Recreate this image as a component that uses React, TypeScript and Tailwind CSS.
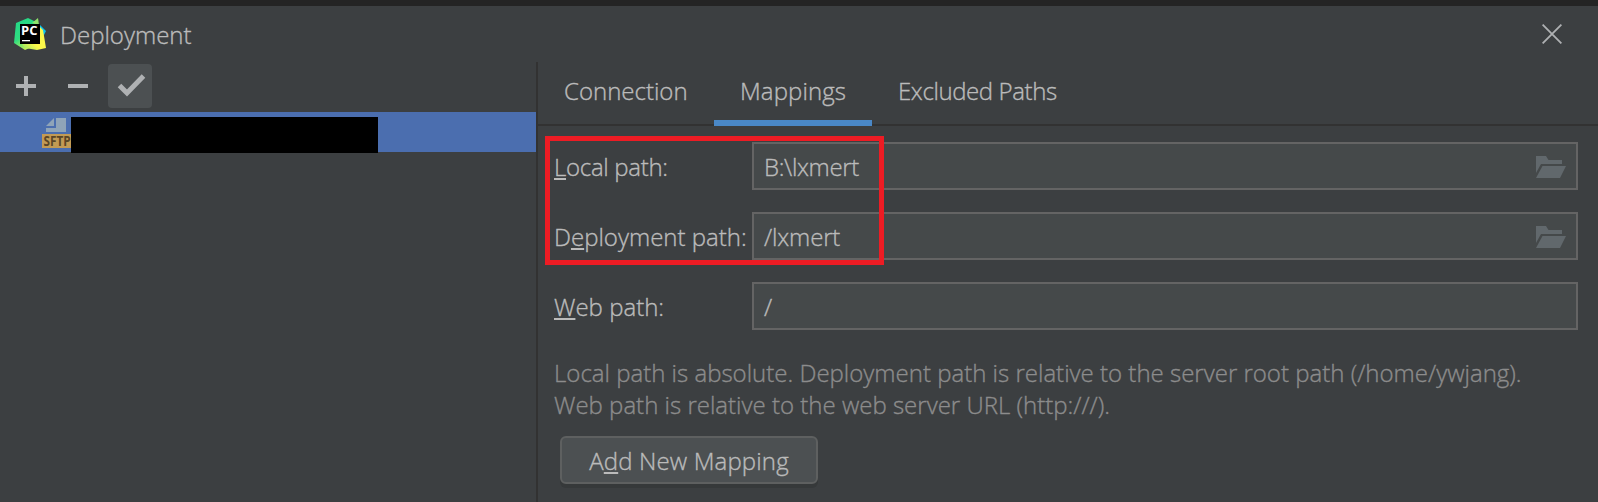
import React from "react";

function Logo() {
  return (
    <svg width="32" height="32" viewBox="0 0 32 32" className="shrink-0">
      <defs>
        <linearGradient id="g1" x1="0" y1="0" x2="0.5" y2="1">
          <stop offset="0" stopColor="#21d789" />
          <stop offset="0.6" stopColor="#2fdc80" />
          <stop offset="1" stopColor="#c8f255" />
        </linearGradient>
        <linearGradient id="g2" x1="0" y1="1" x2="1" y2="0">
          <stop offset="0" stopColor="#8fe86a" />
          <stop offset="0.4" stopColor="#fcf84a" />
          <stop offset="1" stopColor="#fcf84a" />
        </linearGradient>
      </defs>
      <path d="M26 7l6 6-3 6-6-3z" fill="#07c3f2" />
      <path d="M2 5L14 0l8 4-2 24-9 4L0 25z" fill="url(#g1)" />
      <path d="M18 5L24 0l1 7z" fill="#8fe36a" />
      <path d="M26 9l3 3 3 18-9 2-12-2-3-4 18-1z" fill="url(#g2)" />
      <rect x="6" y="6" width="20" height="20" fill="#000" />
      <rect x="8" y="22" width="8" height="1.3" fill="#fff" />
      <text x="7" y="17" fontSize="12.2" fontWeight="700" fill="#fff" fontFamily="Open Sans, sans-serif" textLength="16.4" lengthAdjust="spacingAndGlyphs">PC</text>
    </svg>
  );
}

function FolderIcon() {
  return (
    <svg width="30" height="22" viewBox="0 0 30 22" fill="#61686c" className="mt-px shrink-0">
      <path d="M0 0h10l2.5 4H26v4H5L0 17z" />
      <path d="M6.5 10H30l-6 12H0z" />
    </svg>
  );
}

function Field({ label, children, browse }: { label: React.ReactNode; children: React.ReactNode; browse?: boolean }) {
  return (
    <div className="flex h-12 items-center">
      <div className="w-[198px] shrink-0 pt-[2px] whitespace-nowrap">{label}</div>
      <div className="flex h-12 flex-1 items-center justify-between border-2 border-[#646464] bg-[#45494a] pt-px pr-[10px] pl-[10px]">
        {children}
        {browse && <FolderIcon />}
      </div>
    </div>
  );
}

function Key({ children }: { children: string }) {
  return <span className="underline decoration-2 underline-offset-2 [text-decoration-skip-ink:none]">{children}</span>;
}

export default function App() {
  return (
    <div className="relative flex h-[502px] w-[1598px] flex-col overflow-hidden bg-[#3c3f41] font-['Open_Sans',sans-serif] text-[24px] leading-8 font-light text-[#bbbbbb] [-webkit-text-stroke:0.35px]">
      <div className="h-[6px] shrink-0 bg-[#242424]" />
      <header className="flex h-14 shrink-0 items-center justify-between pr-9 pl-[14px]">
        <div className="flex items-center gap-[14px]">
          <Logo />
          <span className="pt-[2px]">Deployment</span>
        </div>
        <svg width="20" height="20" viewBox="0 0 20 20" stroke="#afb1b3" strokeWidth="1.8">
          <path d="M.6.6l18.8 18.8M19.4.6L.6 19.4" />
        </svg>
      </header>
      <div className="flex min-h-0 flex-1">
        <aside className="flex w-[536px] shrink-0 flex-col">
          <div className="flex h-[50px] items-center pb-[2px] pl-4">
            <svg width="20" height="20" fill="#afb1b3"><path d="M8 0h4v8h8v4h-8v8H8v-8H0V8h8z" /></svg>
            <svg width="20" height="20" fill="#afb1b3" className="ml-8"><path d="M0 8h20v4H0z" /></svg>
            <div className="ml-5 flex size-11 items-center justify-center rounded bg-[#4c5052]">
              <svg width="44" height="44" viewBox="0 0 44 44" fill="none" stroke="#afb1b3" strokeWidth="5"><path d="M11.5 21.5l7.5 7.5L35.5 12" /></svg>
            </div>
          </div>
          <div className="flex h-10 bg-[#4b6eaf] pl-[42px]">
            <svg width="29" height="40" viewBox="0 0 29 40" className="shrink-0 overflow-visible">
              <path d="M4 14L12 6v8zM14 6h10v14H4v-4h10z" fill="#8fa4b8" />
              <rect y="22" width="29" height="14" fill="#c29a54" />
              <text x="1.6" y="34" fontSize="14" fontWeight="700" fill="#5a4526" fontFamily="Open Sans, sans-serif" textLength="27" lengthAdjust="spacingAndGlyphs">SFTP</text>
            </svg>
            <div className="mt-[5px] h-9 w-[307px] bg-black" />
          </div>
        </aside>
        <main className="flex-1 border-l-2 border-[#323232]">
          <nav className="flex h-16 border-b-2 border-[#323232]">
            <div className="w-44 pt-[13px] pl-[26px]">Connection</div>
            <div className="h-16 w-[158px] border-b-[6px] border-[#4a88c7] pt-[13px] pl-[26px] tracking-[0.1px]">Mappings</div>
            <div className="pt-[13px] pl-[26px] tracking-[-0.4px]">Excluded Paths</div>
          </nav>
          <div className="flex flex-col gap-[22px] pt-4 pr-5 pl-4">
            <Field label={<span className="tracking-[-0.3px]"><Key>L</Key>ocal path:</span>} browse>
              <span className="pt-px tracking-[-0.35px]">B:\lxmert</span>
            </Field>
            <Field label={<>D<Key>e</Key>ployment path:</>} browse>
              <span className="pt-px tracking-[-0.15px]">/lxmert</span>
            </Field>
            <Field label={<><Key>W</Key>eb path:</>}>
              <span className="pt-px">/</span>
            </Field>
          </div>
          <div className="mt-[27px] pl-4 whitespace-nowrap text-[#8c8c8c]">
            <p>Local path is absolute. Deployment path is relative to the server root path (/home/ywjang).</p>
            <p>Web path is relative to the web server URL (http:///).</p>
          </div>
          <button className="mt-[15px] ml-[22px] block h-12 w-[258px] rounded-[6px] border-2 border-[#5e6060] bg-[#4c5052] pt-px tracking-[0.15px] whitespace-nowrap shadow-[0_4px_0_#36393a]">
            A<Key>d</Key>d New Mapping
          </button>
        </main>
      </div>
      <div className="absolute top-[136px] left-[545px] h-[129px] w-[339px] border-[5px] border-[#ed1c24]" />
    </div>
  );
}
